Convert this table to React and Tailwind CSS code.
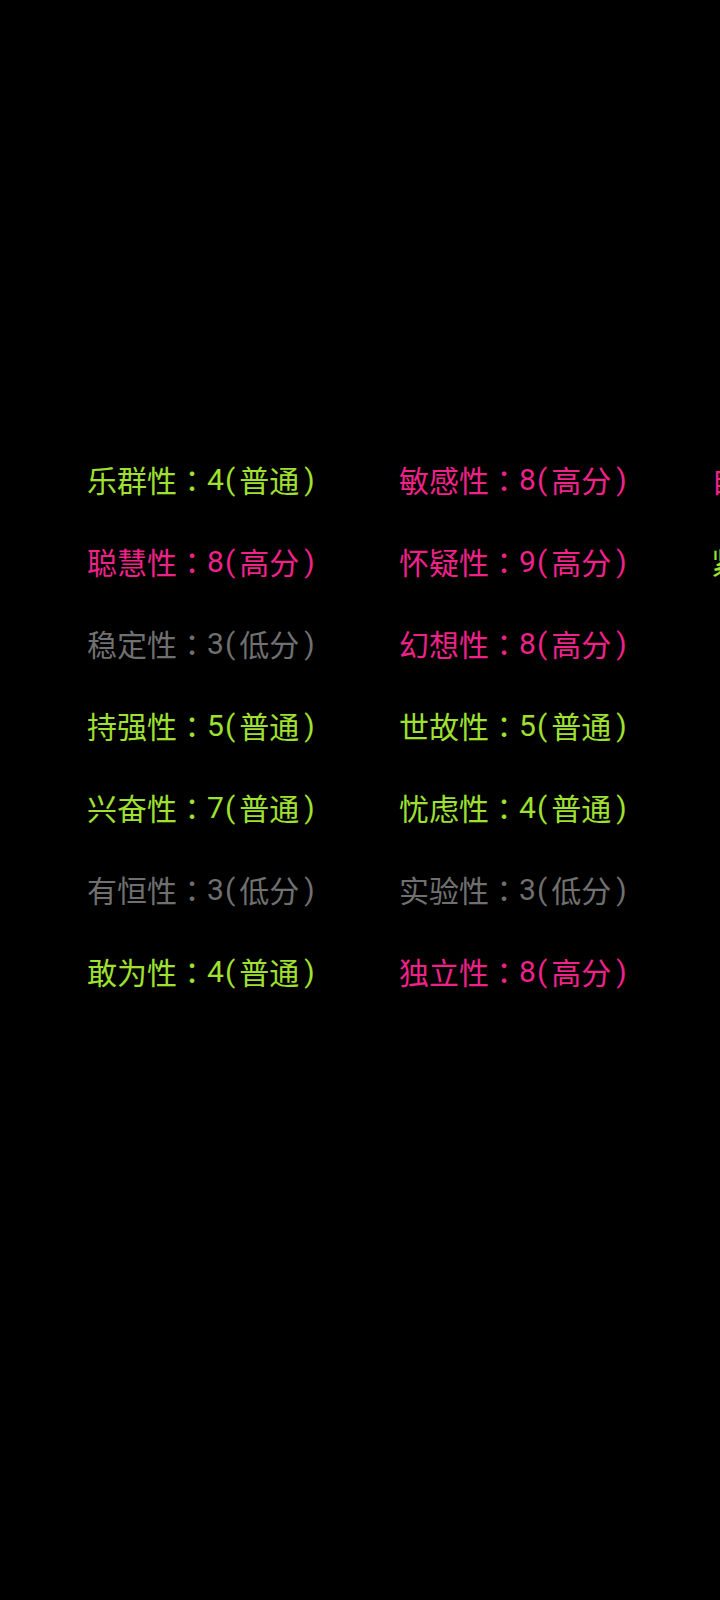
const G = 'text-[#9fe030]';
const P = 'text-[#ee2288]';
const N = 'text-[#707070]';

const columns = [
  [
    ['乐群性', 4, '普通'],
    ['聪慧性', 8, '高分'],
    ['稳定性', 3, '低分'],
    ['持强性', 5, '普通'],
    ['兴奋性', 7, '普通'],
    ['有恒性', 3, '低分'],
    ['敢为性', 4, '普通'],
  ],
  [
    ['敏感性', 8, '高分'],
    ['怀疑性', 9, '高分'],
    ['幻想性', 8, '高分'],
    ['世故性', 5, '普通'],
    ['忧虑性', 4, '普通'],
    ['实验性', 3, '低分'],
    ['独立性', 8, '高分'],
  ],
  [
    ['自律性', 8, '高分'],
    ['紧张性', 5, '普通'],
  ],
];

const tone = (level) => (level === '高分' ? P : level === '低分' ? N : G);

export default function App() {
  return (
    <div
      className="w-[720px] h-[1600px] bg-black overflow-hidden flex pt-[438px] pl-[87px] whitespace-nowrap"
      style={{ fontFamily: '"Noto Sans CJK SC", "Noto Sans", sans-serif' }}
    >
      {columns.map((col, ci) => (
        <div key={ci} className="w-[312px] shrink-0 flex flex-col">
          {col.map(([name, score, level]) => (
            <div key={name} className={`h-[82px] flex items-center text-[30px] ${tone(level)}`}>
              <span>{name}</span>
              <span className="font-['Noto_Sans_CJK_JP',sans-serif]">：</span>
              <span className="font-['Roboto',sans-serif]">{score}</span>
              <span className="font-['Roboto',sans-serif] ml-[1px] mr-[4px]">(</span>
              <span>{level}</span>
              <span className="font-['Roboto',sans-serif] ml-[5px]">)</span>
            </div>
          ))}
        </div>
      ))}
    </div>
  );
}
